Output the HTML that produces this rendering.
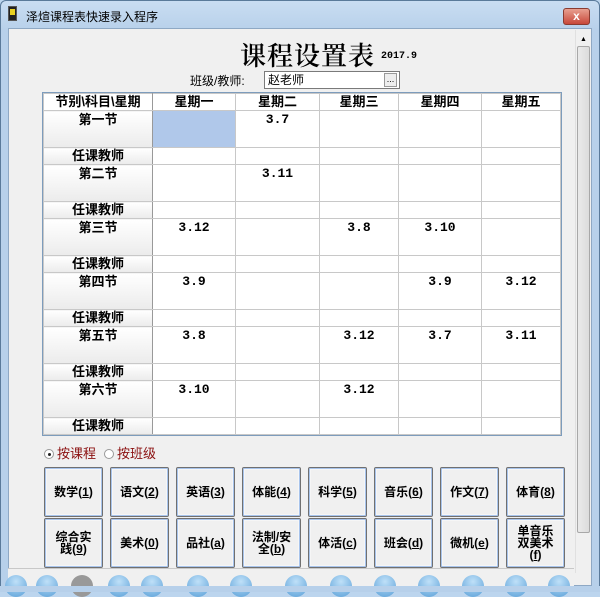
<!DOCTYPE html>
<html><head><meta charset="utf-8"><style>
*{margin:0;padding:0;box-sizing:border-box}
body{width:600px;height:592px;overflow:hidden;background:#bcd5ee;font-family:"Liberation Sans","Noto Sans CJK SC",sans-serif;position:relative}
.frame{position:absolute;left:0;top:0;width:600px;height:592px;border:1px solid #5a7a9a;border-radius:6px 6px 0 0;background:linear-gradient(#c9ddf2,#b7d0ea 30px)}
.title{position:absolute;left:26px;top:8px;font-size:12px;color:#000}
.close{position:absolute;left:563px;top:8px;width:27px;height:17px;background:linear-gradient(#e8a090,#c8483a);border:1px solid #8a3b30;border-radius:3px;color:#fff;font-size:12px;text-align:center;line-height:15px;font-weight:bold}
.client{position:absolute;left:8px;top:28px;width:584px;height:558px;background:#f0f0f0;border:1px solid #8ea8c4;overflow:hidden}
.sb{position:absolute;left:575px;top:30px;width:16px;height:543px;background:#f0f0f0;border-left:1px solid #e0e0e0}
.thumb{position:absolute;left:577px;top:46px;width:13px;height:487px;background:linear-gradient(90deg,#eaeaea,#dcdcdc);border:1px solid #a8a8a8;border-radius:2px}
.h1{position:absolute;left:240px;top:36px;font-family:"Noto Serif CJK SC",serif;font-size:26px;font-weight:600;color:#000;letter-spacing:1px}
.ver{position:absolute;left:381px;top:51px;font-size:10px;font-weight:bold;font-family:"Liberation Mono",monospace}
.lbl{position:absolute;left:190px;top:72px;font-size:12px}
.inp{position:absolute;left:264px;top:71px;width:136px;height:18px;background:#fff;border:1px solid #7a7a7a;font-size:12px;padding-left:3px;line-height:16px}
.dots{position:absolute;right:2px;top:1px;width:13px;height:14px;background:#eee;border:1px solid #999;font-size:9px;line-height:10px;text-align:center}
table{position:absolute;left:43px;top:93px;border-collapse:collapse;background:#fff;font-size:13px;font-weight:bold;outline:1px solid #7d9cbc}
td{border:1px solid #c8c8c8;text-align:center;vertical-align:top;padding:0;font-family:"Liberation Mono","Noto Sans CJK SC",monospace}
tr.hd td{height:17px;background:#fff;line-height:15px;font-family:"Liberation Sans","Noto Sans CJK SC",sans-serif}
tr.p td{height:37px;line-height:16px;padding-top:1px}
tr.t td{height:17px;line-height:15px}
td.rh{background:linear-gradient(#fff,#ebebeb);border-right:1px solid #999;font-family:"Liberation Sans","Noto Sans CJK SC",sans-serif}
.sel{background:#b0c8ea}
.radio{position:absolute;top:443px;font-size:13px;color:#8b1010}
.rc{display:inline-block;width:10px;height:10px;border:1px solid #999;border-radius:50%;background:#fff;margin-right:3px;vertical-align:-1px;position:relative}
.rc.on:after{content:"";position:absolute;left:3px;top:3px;width:3px;height:3px;background:#222;border-radius:50%}
.btn{position:absolute;width:59px;height:50px;background:#f0f0f0;border:1px solid #707070;box-shadow:inset 0 0 0 1px #a8c4ec,inset 0 0 0 2px #f6f6f6;font-size:12px;font-weight:bold;display:flex;align-items:center;justify-content:center;text-align:center;line-height:12px;border-radius:2px}
.btn span{white-space:nowrap;display:block}
.tb{position:absolute;left:8px;top:568px;width:566px;height:18px;border-top:1px solid #c8c8c8;background:#f0f0f0}
.ic{position:absolute;top:575px;width:22px;height:22px;border-radius:50%;background:radial-gradient(circle at 50% 30%,#bfe0f8,#5aa0d8)}
.bot{position:absolute;left:0;top:586px;width:600px;height:6px;background:#b7d0ea}
</style></head><body>
<div class="frame"></div>
<div style="position:absolute;left:8px;top:6px;width:9px;height:15px;background:#222;border:1px solid #555"><div style="margin:2px 1px;height:6px;background:#e8d020"></div></div>
<div class="title">泽煊课程表快速录入程序</div>
<div class="close">x</div>
<div class="client"></div>
<div class="sb"></div><div class="thumb"></div>
<div style="position:absolute;left:580px;top:36px;font-size:7px">▲</div>
<div class="h1">课程设置表</div>
<div class="ver">2017.9</div>
<div class="lbl">班级/教师:</div>
<div class="inp">赵老师<div class="dots">...</div></div>
<table>
<colgroup><col style="width:109px"><col style="width:83px"><col style="width:84px"><col style="width:79px"><col style="width:83px"><col style="width:79px"></colgroup>
<tr class="hd"><td class="rh">节别\科目\星期</td><td>星期一</td><td>星期二</td><td>星期三</td><td>星期四</td><td>星期五</td></tr>
<tr class="p"><td class="rh">第一节</td><td class="sel"></td><td>3.7</td><td></td><td></td><td></td></tr>
<tr class="t"><td class="rh">任课教师</td><td></td><td></td><td></td><td></td><td></td></tr>
<tr class="p"><td class="rh">第二节</td><td></td><td>3.11</td><td></td><td></td><td></td></tr>
<tr class="t"><td class="rh">任课教师</td><td></td><td></td><td></td><td></td><td></td></tr>
<tr class="p"><td class="rh">第三节</td><td>3.12</td><td></td><td>3.8</td><td>3.10</td><td></td></tr>
<tr class="t"><td class="rh">任课教师</td><td></td><td></td><td></td><td></td><td></td></tr>
<tr class="p"><td class="rh">第四节</td><td>3.9</td><td></td><td></td><td>3.9</td><td>3.12</td></tr>
<tr class="t"><td class="rh">任课教师</td><td></td><td></td><td></td><td></td><td></td></tr>
<tr class="p"><td class="rh">第五节</td><td>3.8</td><td></td><td>3.12</td><td>3.7</td><td>3.11</td></tr>
<tr class="t"><td class="rh">任课教师</td><td></td><td></td><td></td><td></td><td></td></tr>
<tr class="p"><td class="rh">第六节</td><td>3.10</td><td></td><td>3.12</td><td></td><td></td></tr>
<tr class="t"><td class="rh">任课教师</td><td></td><td></td><td></td><td></td><td></td></tr>
</table>
<div class="radio" style="left:44px"><span class="rc on"></span>按课程</div>
<div class="radio" style="left:104px"><span class="rc"></span>按班级</div>
<div class="btn" style="left:44px;top:467px"><span>数学(<u>1</u>)</span></div>
<div class="btn" style="left:110px;top:467px"><span>语文(<u>2</u>)</span></div>
<div class="btn" style="left:176px;top:467px"><span>英语(<u>3</u>)</span></div>
<div class="btn" style="left:242px;top:467px"><span>体能(<u>4</u>)</span></div>
<div class="btn" style="left:308px;top:467px"><span>科学(<u>5</u>)</span></div>
<div class="btn" style="left:374px;top:467px"><span>音乐(<u>6</u>)</span></div>
<div class="btn" style="left:440px;top:467px"><span>作文(<u>7</u>)</span></div>
<div class="btn" style="left:506px;top:467px"><span>体育(<u>8</u>)</span></div>
<div class="btn" style="left:44px;top:518px"><span>综合实<br>践(<u>9</u>)</span></div>
<div class="btn" style="left:110px;top:518px"><span>美术(<u>0</u>)</span></div>
<div class="btn" style="left:176px;top:518px"><span>品社(<u>a</u>)</span></div>
<div class="btn" style="left:242px;top:518px"><span>法制/安<br>全(<u>b</u>)</span></div>
<div class="btn" style="left:308px;top:518px"><span>体活(<u>c</u>)</span></div>
<div class="btn" style="left:374px;top:518px"><span>班会(<u>d</u>)</span></div>
<div class="btn" style="left:440px;top:518px"><span>微机(<u>e</u>)</span></div>
<div class="btn" style="left:506px;top:518px"><span>单音乐<br>双美术<br>(<u>f</u>)</span></div>
<div class="tb"></div>
<div class="ic" style="left:5px"></div><div class="ic" style="left:36px"></div><div class="ic" style="left:71px;background:#999"></div><div class="ic" style="left:108px"></div><div class="ic" style="left:141px"></div><div class="ic" style="left:187px"></div><div class="ic" style="left:230px"></div><div class="ic" style="left:285px"></div><div class="ic" style="left:330px"></div><div class="ic" style="left:374px"></div><div class="ic" style="left:418px"></div><div class="ic" style="left:462px"></div><div class="ic" style="left:505px"></div><div class="ic" style="left:548px"></div>
<div class="bot"></div>
</body></html>
